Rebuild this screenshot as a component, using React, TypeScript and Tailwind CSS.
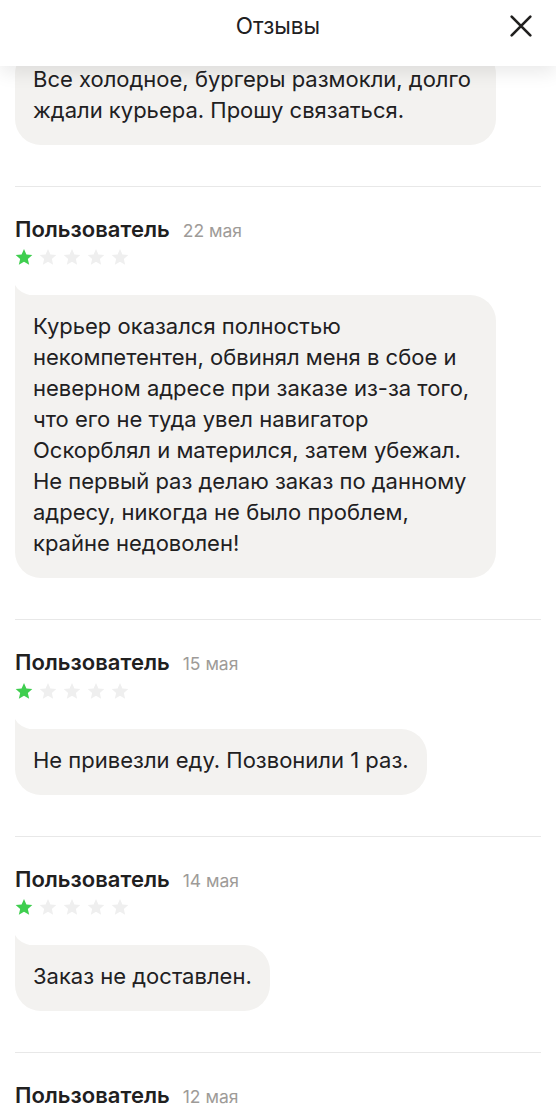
import React from "react";

type Review = {
  date: string;
  rating: number;
  text: string;
};

const reviews: Review[] = [
  {
    date: "22 мая",
    rating: 1,
    text: "Курьер оказался полностью некомпетентен, обвинял меня в сбое и неверном адресе при заказе из-за того, что его не туда увел навигатор Оскорблял и матерился, затем убежал. Не первый раз делаю заказ по данному адресу, никогда не было проблем, крайне недоволен!",
  },
  { date: "15 мая", rating: 1, text: "Не привезли еду. Позвонили 1 раз." },
  { date: "14 мая", rating: 1, text: "Заказ не доставлен." },
];

const Star = ({ filled }: { filled: boolean }) => (
  <svg width="20" height="20" viewBox="0 0 24 24" className="shrink-0">
    <path
      d="M12 2.5l2.9 6.6 7.1.6-5.4 4.7 1.6 7-6.2-3.7-6.2 3.7 1.6-7L2 9.7l7.1-.6z"
      fill={filled ? "#3fce4f" : "#efefef"}
    />
  </svg>
);

const Bubble = ({ text, tail = true }: { text: string; tail?: boolean }) => (
  <div className="relative self-start max-w-[481px]">
    {tail && (
      <svg
        width="18"
        height="12"
        viewBox="0 0 18 12"
        className="absolute left-0 top-[-11px]"
      >
        <path d="M0 12 L0 1 Q4 9 18 12 Z" fill="#f3f2f0" />
      </svg>
    )}
    <div
      className={`bg-[#f3f2f0] rounded-[26px] ${tail ? "rounded-tl-none" : ""} px-[18px] pt-4 pb-[19px] text-[22px] leading-[31px] text-[#21201f]`}
    >
      {text}
    </div>
  </div>
);

const Header = ({ date }: { date: string }) => (
  <div className="flex items-baseline gap-[13px] pt-[27px]">
    <span className="text-[22px] font-semibold leading-[30px] text-[#21201f]">
      Пользователь
    </span>
    <span className="text-[17.5px] text-[#9e9b98]">{date}</span>
  </div>
);

const ReviewItem = ({ review }: { review: Review }) => (
  <div className="flex flex-col">
    <Header date={review.date} />
    <div className="flex gap-1 -ml-[1px] pt-[3px]">
      {[1, 2, 3, 4, 5].map((i) => (
        <Star key={i} filled={i <= review.rating} />
      ))}
    </div>
    <div className="pt-[28px] flex flex-col">
      <Bubble text={review.text} />
    </div>
  </div>
);

export default function App() {
  return (
    <div
      className="w-[556px] h-[1117px] overflow-hidden bg-white flex flex-col"
      style={{ fontFamily: 'Inter, "Noto Sans", sans-serif' }}
    >
      <header className="relative z-10 h-[66px] shrink-0 bg-white flex items-center justify-center shadow-[0_6px_18px_rgba(0,0,0,0.09)]">
        <span className="text-[22.5px] text-[#21201f] -mt-[14px]">Отзывы</span>
        <button className="absolute right-[21px] top-[12px] text-[#21201f]">
          <svg width="28" height="28" viewBox="0 0 24 24">
            <path
              d="M4 4L20 20M20 4L4 20"
              stroke="currentColor"
              strokeWidth="2.3"
              strokeLinecap="round"
            />
          </svg>
        </button>
      </header>

      <main className="flex-1 overflow-hidden px-[15px]">
        <div className="-mt-[18px] flex flex-col">
          <Bubble
            tail={false}
            text="Все холодное, бургеры размокли, долго ждали курьера. Прошу связаться."
          />
          {reviews.map((r, idx) => (
            <div key={idx} className="mt-[41px] border-t border-[#e8e8e8]">
              <ReviewItem review={r} />
            </div>
          ))}
          <div className="mt-[41px] border-t border-[#e8e8e8]">
            <Header date="12 мая" />
          </div>
        </div>
      </main>
    </div>
  );
}
